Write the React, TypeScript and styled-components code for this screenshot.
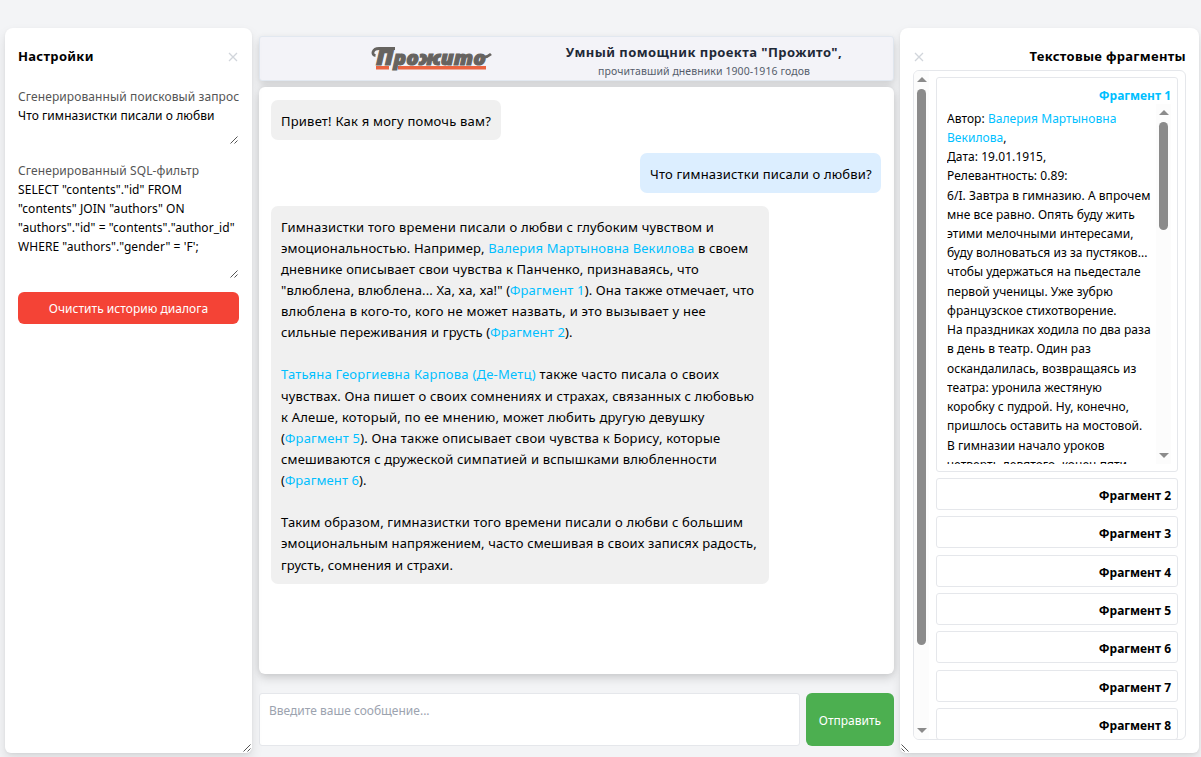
import React from 'react';
import styled, { createGlobalStyle } from 'styled-components';

const GlobalStyle = createGlobalStyle`
  *, *::before, *::after { box-sizing: border-box; }
  body { margin: 0; background: #f3f4f6; color: #000; font-family: "Noto Sans", sans-serif; font-size: 12px; }
  button { font-family: inherit; }
`;

const Page = styled.div`
  display: flex;
  height: 757px;
  padding: 28px 2px 4px 5px;
  overflow: hidden;
`;

const SidePanel = styled.aside<{ $width: number }>`
  display: flex;
  flex-direction: column;
  flex: none;
  position: relative;
  width: ${p => p.$width}px;
  padding: 18px 13px 0;
  background: #fff;
  border-radius: 8px 8px 6px 6px;
  box-shadow: 0 6px 12px rgba(0, 0, 0, 0.1), 0 1px 3px rgba(0, 0, 0, 0.05);
`;

const PanelHead = styled.header<{ $reverse?: boolean }>`
  display: flex;
  flex-direction: ${p => (p.$reverse ? 'row-reverse' : 'row')};
  align-items: center;
  justify-content: space-between;
  height: 20px;
`;

const PanelTitle = styled.h2`
  margin: 0;
  font-size: 13px;
  font-weight: 700;
  letter-spacing: 0.3px;
  line-height: 20px;
`;

const CloseButton = styled.button`
  display: flex;
  padding: 2px 1px 0;
  border: 0;
  background: none;
  color: #d1d5db;
`;

const Field = styled.section<{ $height: number }>`
  display: flex;
  flex-direction: column;
  position: relative;
  height: ${p => p.$height}px;
  padding-top: 21px;
`;

const FieldLabel = styled.div`
  color: #555;
  line-height: 19px;
  letter-spacing: 0.1px;
  white-space: nowrap;
`;

const FieldText = styled.div`
  line-height: 19px;
  letter-spacing: 0.06px;
  white-space: nowrap;
`;

const Grip = styled.svg<{ $left?: boolean; $bottom: number }>`
  position: absolute;
  bottom: ${p => p.$bottom}px;
  ${p => (p.$left ? 'left: 1px; transform: scaleX(-1);' : 'right: 1px;')}
`;

const ClearButton = styled.button`
  height: 32px;
  margin-top: 13px;
  padding: 1px 0 0;
  border: 0;
  border-radius: 6px;
  background: #f44336;
  color: #fff;
  font-size: 12px;
  letter-spacing: 0.03px;
`;

const Main = styled.main`
  display: flex;
  flex-direction: column;
  flex: none;
  width: 635px;
  margin: 8px 6px 0 7px;
`;

const Banner = styled.header`
  display: flex;
  height: 45px;
  flex: none;
  border: 1px solid #e2e8f0;
  border-radius: 3px;
  background: #f3f3f8;
  box-shadow: 0 6px 7px rgba(0, 0, 0, 0.1), 0 0 5px rgba(0, 0, 0, 0.06);
`;

const LogoCell = styled.div`
  flex: none;
  width: 235px;
  padding: 1px 0 0 110px;
`;

const BannerText = styled.div`
  display: flex;
  flex-direction: column;
  align-items: center;
  flex: none;
  width: 418px;
  padding-top: 5px;
`;

const BannerTitle = styled.h1`
  margin: 0;
  color: #1f2937;
  font-size: 13px;
  line-height: 20px;
  letter-spacing: 0.43px;
  white-space: nowrap;
`;

const BannerNote = styled.p`
  margin: 0;
  padding-top: 1px;
  color: #555d6b;
  font-size: 10.5px;
  line-height: 17px;
  letter-spacing: 0.08px;
  white-space: nowrap;
`;

const Chat = styled.section`
  display: flex;
  flex-direction: column;
  flex: none;
  gap: 13px;
  height: 587px;
  margin-top: 6px;
  padding: 13px 13px 0 12px;
  border-radius: 6px;
  background: #fff;
  box-shadow: 0 6px 8px rgba(0, 0, 0, 0.1), 0 0 7px rgba(0, 0, 0, 0.12);
`;

const Bubble = styled.div<{ $own?: boolean; $width: number }>`
  flex: none;
  align-self: ${p => (p.$own ? 'flex-end' : 'flex-start')};
  width: ${p => p.$width}px;
  padding: 10.5px 0 8.4px 10px;
  border-radius: 7px;
  background: ${p => (p.$own ? '#dceeff' : '#f0f0f0')};
  font-size: 13px;
  line-height: 21.125px;
`;

const ChatLine = styled.div<{ $track: number }>`
  letter-spacing: ${p => p.$track}px;
  white-space: nowrap;
`;

const Paragraph = styled.div`
  & + & { margin-top: 21.125px; }
`;

const Mark = styled.span`
  color: #00bfff;
`;

const Composer = styled.form`
  display: flex;
  gap: 6px;
  height: 53px;
  margin-top: 19px;
`;

const MessageInput = styled.textarea`
  flex: 1;
  padding: 8px 9px;
  border: 1px solid #e5e7eb;
  border-radius: 3px;
  background: #fff;
  font: 12px/18px "Noto Sans", sans-serif;
  resize: none;
  &::placeholder { color: #9ca3af; }
`;

const SendButton = styled.button`
  width: 88px;
  padding: 2px 0 0;
  border: 0;
  border-radius: 6px;
  background: #4caf50;
  color: #fff;
  font-size: 12px;
`;

const ListFrame = styled.div`
  display: flex;
  height: 670px;
  margin-top: 4px;
  border: 1px solid #e5e7eb;
  border-radius: 6px;
  overflow: hidden;
`;

const Track = styled.div`
  display: flex;
  flex-direction: column;
  align-items: center;
  flex: none;
  width: 15px;
  background: #fcfcfc;
`;

const Arrow = styled.i<{ $down?: boolean }>`
  width: 0;
  height: 0;
  margin: 6px 0;
  border: 5px solid transparent;
  border-top: ${p => (p.$down ? '5px solid #8b8b8b' : '0')};
  border-bottom: ${p => (p.$down ? '0' : '5px solid #8b8b8b')};
`;

const Thumb = styled.div<{ $length: number }>`
  width: 9px;
  height: ${p => p.$length}px;
  margin: 1px 0 auto;
  border-radius: 5px;
  background: #8b8b8b;
`;

const Cards = styled.div`
  display: flex;
  flex-direction: column;
  gap: 6.35px;
  flex: 1;
  padding: 6px 7px 0;
`;

const Card = styled.article<{ $height: number }>`
  display: flex;
  flex-direction: column;
  flex: none;
  height: ${p => p.$height}px;
  padding: 8px 6px 6px 10px;
  border: 1px solid #e5e7eb;
  border-radius: 3px;
`;

const CardTitle = styled.h3<{ $active?: boolean }>`
  margin: 0;
  padding-top: ${p => (p.$active ? 1 : 0)}px;
  color: ${p => (p.$active ? '#00bfff' : '#000')};
  font-size: 12px;
  line-height: ${p => (p.$active ? 17 : 18)}px;
  text-align: right;
`;

const Excerpt = styled.div`
  display: flex;
  height: 360px;
  overflow: hidden;
`;

const ExcerptText = styled.div`
  flex: 1;
  padding-top: 4.6px;
  line-height: 19.23px;
  white-space: nowrap;
`;

const ExcerptLine = styled.div`
  letter-spacing: 0.05px;
`;

const ResizeGrip = ({ left, bottom = 1 }: { left?: boolean; bottom?: number }) => (
  <Grip $left={left} $bottom={bottom} width="8" height="8" viewBox="0 0 8 8" stroke="#555" strokeWidth="1">
    <path d="M0.5 7.5L7.5 0.5M4.5 7.5L7.5 4.5" />
  </Grip>
);

const Cross = () => (
  <CloseButton aria-label="Закрыть">
    <svg width="10" height="10" viewBox="0 0 10 10" stroke="currentColor" strokeWidth="1.3">
      <path d="M1 1L9 9M9 1L1 9" />
    </svg>
  </CloseButton>
);

const Logo = () => (
  <svg width="124" height="42" viewBox="0 -5 124 42">
    <path d="M6 24.800H19M28 24.800H116" stroke="#ea6440" strokeWidth="3.600" fill="none" />
    <text
      x="6" y="21.5" textLength="110" lengthAdjust="spacingAndGlyphs"
      fontFamily="Open Sans" fontSize="20" fontWeight="800" fontStyle="italic"
      fill="#666360" stroke="#666360" strokeWidth="1.1"
    ><tspan fontSize="23.5">П</tspan>рожито</text>
    <path d="M5.500 12.500C1 12 2.500 5.500 9 5.500H25M113 14Q117 14.500 121 11" stroke="#666360" strokeWidth="2.800" fill="none" />
  </svg>
);

type Line = [number, React.ReactNode];

const answer: Line[][] = [
  [
    [0.18, 'Гимназистки того времени писали о любви с глубоким чувством и'],
    [0.15, <>эмоциональностью. Например, <Mark>Валерия Мартыновна Векилова</Mark> в своем</>],
    [0.17, 'дневнике описывает свои чувства к Панченко, признаваясь, что'],
    [0.14, <>"влюблена, влюблена... Ха, ха, ха!" (<Mark>Фрагмент 1</Mark>). Она также отмечает, что</>],
    [0.24, 'влюблена в кого-то, кого не может назвать, и это вызывает у нее'],
    [0.16, <>сильные переживания и грусть (<Mark>Фрагмент 2</Mark>).</>],
  ],
  [
    [0.23, <><Mark>Татьяна Георгиевна Карпова (Де-Метц)</Mark> также часто писала о своих</>],
    [0.16, 'чувствах. Она пишет о своих сомнениях и страхах, связанных с любовью'],
    [0.22, 'к Алеше, который, по ее мнению, может любить другую девушку'],
    [0.2, <>(<Mark>Фрагмент 5</Mark>). Она также описывает свои чувства к Борису, которые</>],
    [0.17, 'смешиваются с дружеской симпатией и вспышками влюбленности'],
    [0.1, <>(<Mark>Фрагмент 6</Mark>).</>],
  ],
  [
    [0.17, 'Таким образом, гимназистки того времени писали о любви с большим'],
    [0.11, 'эмоциональным напряжением, часто смешивая в своих записях радость,'],
    [0.12, 'грусть, сомнения и страхи.'],
  ],
];

const excerpt = [
  'Дата: 19.01.1915,',
  'Релевантность: 0.89:',
  '6/I. Завтра в гимназию. А впрочем',
  'мне все равно. Опять буду жить',
  'этими мелочными интересами,',
  'буду волноваться из за пустяков...',
  'чтобы удержаться на пьедестале',
  'первой ученицы. Уже зубрю',
  'французское стихотворение.',
  'На праздниках ходила по два раза',
  'в день в театр. Один раз',
  'оскандалилась, возвращаясь из',
  'театра: уронила жестяную',
  'коробку с пудрой. Ну, конечно,',
  'пришлось оставить на мостовой.',
  'В гимназии начало уроков',
  'четверть девятого, конец пяти',
];

export default function App() {
  return (
    <>
      <GlobalStyle />
      <Page>
        <SidePanel $width={247}>
          <PanelHead>
            <PanelTitle>Настройки</PanelTitle>
            <Cross />
          </PanelHead>
          <Field $height={73.5}>
            <FieldLabel>Сгенерированный поисковый запрос</FieldLabel>
            <FieldText>Что гимназистки писали о любви</FieldText>
            <ResizeGrip bottom={-4} />
          </Field>
          <Field $height={139.5}>
            <FieldLabel>Сгенерированный SQL-фильтр</FieldLabel>
            <FieldText>SELECT "contents"."id" FROM</FieldText>
            <FieldText>"contents" JOIN "authors" ON</FieldText>
            <FieldText>"authors"."id" = "contents"."author_id"</FieldText>
            <FieldText>WHERE "authors"."gender" = 'F';</FieldText>
            <ResizeGrip />
          </Field>
          <ClearButton>Очистить историю диалога</ClearButton>
          <ResizeGrip />
        </SidePanel>

        <Main>
          <Banner>
            <LogoCell><Logo /></LogoCell>
            <BannerText>
              <BannerTitle>Умный помощник проекта "Прожито",</BannerTitle>
              <BannerNote>прочитавший дневники 1900-1916 годов</BannerNote>
            </BannerText>
          </Banner>
          <Chat>
            <Bubble $width={230}><ChatLine $track={0.2}>Привет! Как я могу помочь вам?</ChatLine></Bubble>
            <Bubble $own $width={241}><ChatLine $track={0.17}>Что гимназистки писали о любви?</ChatLine></Bubble>
            <Bubble $width={498}>
              {answer.map((lines, i) => (
                <Paragraph key={i}>
                  {lines.map(([track, text], j) => <ChatLine key={j} $track={track}>{text}</ChatLine>)}
                </Paragraph>
              ))}
            </Bubble>
          </Chat>
          <Composer>
            <MessageInput placeholder="Введите ваше сообщение..." />
            <SendButton type="button">Отправить</SendButton>
          </Composer>
        </Main>

        <SidePanel $width={299}>
          <PanelHead $reverse>
            <PanelTitle>Текстовые фрагменты</PanelTitle>
            <Cross />
          </PanelHead>
          <ListFrame>
            <Track><Arrow /><Thumb $length={556} /><Arrow $down /></Track>
            <Cards>
              <Card $height={394.6}>
                <CardTitle $active>Фрагмент 1</CardTitle>
                <Excerpt>
                  <ExcerptText>
                    <ExcerptLine>Автор: <Mark>Валерия Мартыновна</Mark></ExcerptLine>
                    <ExcerptLine><Mark>Векилова</Mark>,</ExcerptLine>
                    {excerpt.map(line => <ExcerptLine key={line}>{line}</ExcerptLine>)}
                  </ExcerptText>
                  <Track><Arrow /><Thumb $length={108} /><Arrow $down /></Track>
                </Excerpt>
              </Card>
              {[2, 3, 4, 5, 6, 7, 8].map(n => (
                <Card key={n} $height={32}><CardTitle>Фрагмент {n}</CardTitle></Card>
              ))}
            </Cards>
          </ListFrame>
          <ResizeGrip left />
        </SidePanel>
      </Page>
    </>
  );
}
